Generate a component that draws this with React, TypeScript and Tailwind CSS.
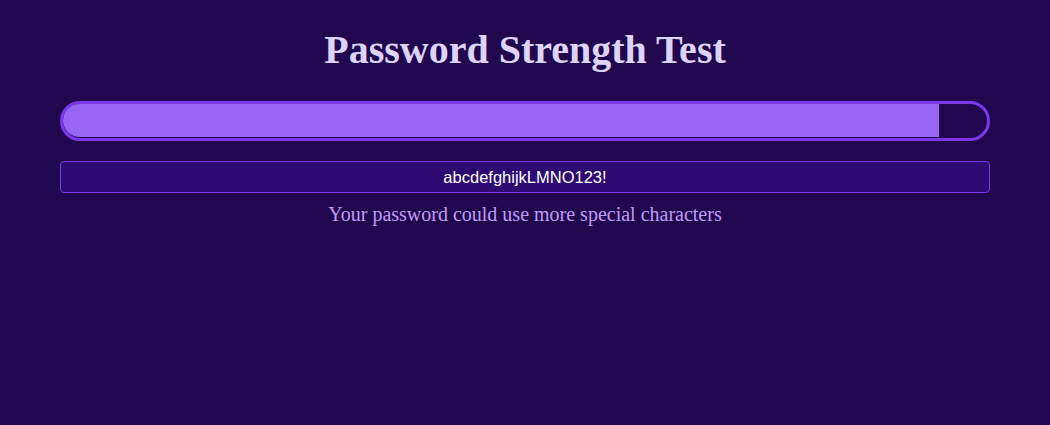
import React from 'react'

export default function App() {
    const password = 'abcdefghijkLMNO123!'
    const strength = 94.8

    return (
        <div className="min-h-[425px] w-full bg-[#20074e] px-[60px] pt-[26px] font-['Liberation_Serif',serif]">
            <h1 className="text-center text-[40px] font-bold leading-[48px] text-[#ddd3fb]">
                Password Strength Test
            </h1>
            <div className="mt-[27px] h-[40px] w-full rounded-full border-[3px] border-[#7a37ec] p-0">
                <div className="h-[33px] rounded-l-full bg-[#9665f3]" style={{ width: `${strength}%` }}></div>
            </div>
            <input
                type="text"
                defaultValue={password}
                className="mt-[20px] block h-[32px] w-full rounded-[4px] border border-[#7a37ec] bg-[#2d0a73] text-center font-['Liberation_Sans',sans-serif] text-[16.5px] text-white outline-none"
            />
            <p className="mt-[8px] text-center text-[20px] leading-[26px] text-[#c09cf5]">
                Your password could use more special characters
            </p>
        </div>
    )
}
